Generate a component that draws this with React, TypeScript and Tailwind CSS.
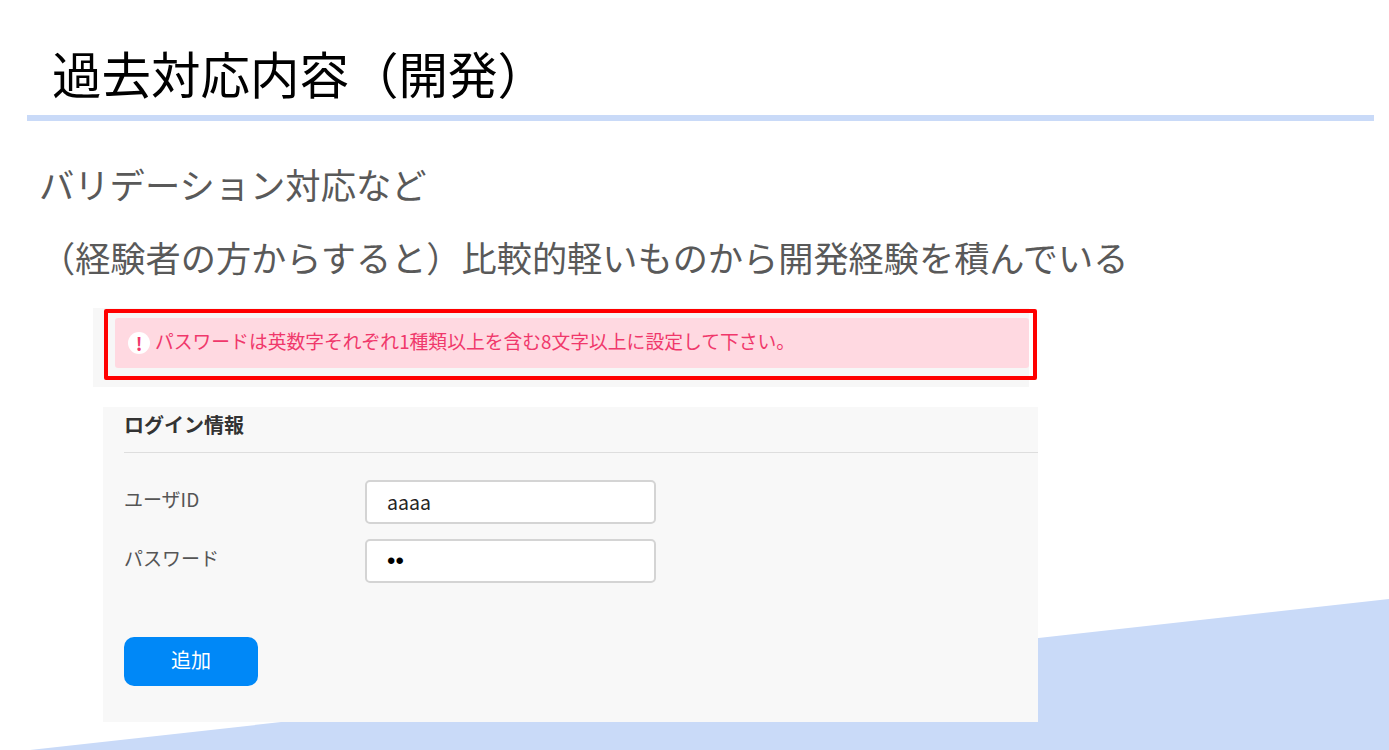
const font = { fontFamily: '"Noto Sans CJK JP", sans-serif' };

const fields = [
  { label: 'ユーザID', value: 'aaaa', mask: false },
  { label: 'パスワード', value: '••', mask: true },
];

const App = () => {
  return (
    <div
      className="relative h-[750px] w-[1389px] overflow-hidden bg-white font-['Noto_Sans_CJK_JP',sans-serif]"
      style={font}
    >
      {/* Background wedge */}
      <svg className="absolute inset-0" width="1389" height="750" viewBox="0 0 1389 750">
        <polygon points="30,750 1389,599 1389,750" fill="#c9daf8" />
      </svg>

      <div className="relative">
        {/* Title */}
        <div className="flex h-[115px] items-start pl-[52px] pt-[35px]">
          <h1 className="text-[49.5px] leading-[76px] font-normal text-black">過去対応内容（開発）</h1>
        </div>
        <div className="ml-[27px] h-[6px] w-[1347px] bg-[#c9daf8]" />

        {/* Body text */}
        <p className="mt-[37px] ml-[39px] text-[35.3px] leading-[52px] text-[#595959]">バリデーション対応など</p>
        <p className="mt-[21px] ml-[40px] text-[35.2px] leading-[52px] text-[#595959]">
          （経験者の方からすると）比較的軽いものから開発経験を積んでいる
        </p>

        {/* Alert */}
        <div className="mt-[25px] ml-[93px] h-[79px] w-[936px] bg-[#f7f7f7] pt-[10px] pl-[22px]">
          <div className="flex h-[50px] w-[914px] items-center rounded-[3px] bg-[#ffd9e1] pl-[13px]">
            <span className="flex h-[22px] w-[22px] items-center justify-center rounded-full bg-white text-[18px] leading-none font-bold text-[#f0386b]">
              !
            </span>
            <span className="ml-[5px] -translate-y-[2px] text-[18.8px] leading-[26px] text-[#f0386b]">
              パスワードは英数字それぞれ1種類以上を含む8文字以上に設定して下さい。
            </span>
          </div>
        </div>

        {/* Login card */}
        <div className="mt-[20px] ml-[103px] h-[315px] w-[935px] bg-[#f8f8f8] pl-[21px]">
          <div className="h-[46px] border-b border-[#dedede]">
            <h2 className="pt-[3px] text-[20px] leading-[30px] font-bold text-[#333333]">ログイン情報</h2>
          </div>
          <div className="mt-[27px] flex flex-col gap-[15px]">
            {fields.map((field) => (
              <div key={field.label} className="flex h-[44px] items-start">
                <label className="w-[241px] pt-[4px] text-[19px] leading-[30px] text-[#555555]">{field.label}</label>
                <div className="flex h-[44px] w-[291px] items-center rounded-[5px] border-2 border-[#d4d4d4] bg-white pl-[20px] text-[19.5px] text-[#222222]">
                  {field.mask ? (
                    <span className="font-['Liberation_Sans',sans-serif] text-[24px] text-black">{field.value}</span>
                  ) : (
                    field.value
                  )}
                </div>
              </div>
            ))}
          </div>
          <button className="mt-[54px] flex h-[49px] w-[134px] items-center justify-center rounded-[10px] bg-[#0088f7] pb-[3px] text-[20px] text-white">
            追加
          </button>
        </div>
      </div>

      {/* Red annotation box */}
      <div className="absolute top-[309px] left-[104px] h-[71px] w-[933px] rounded-[2px] border-4 border-[#ff0000]" />
    </div>
  );
};

export default App;
